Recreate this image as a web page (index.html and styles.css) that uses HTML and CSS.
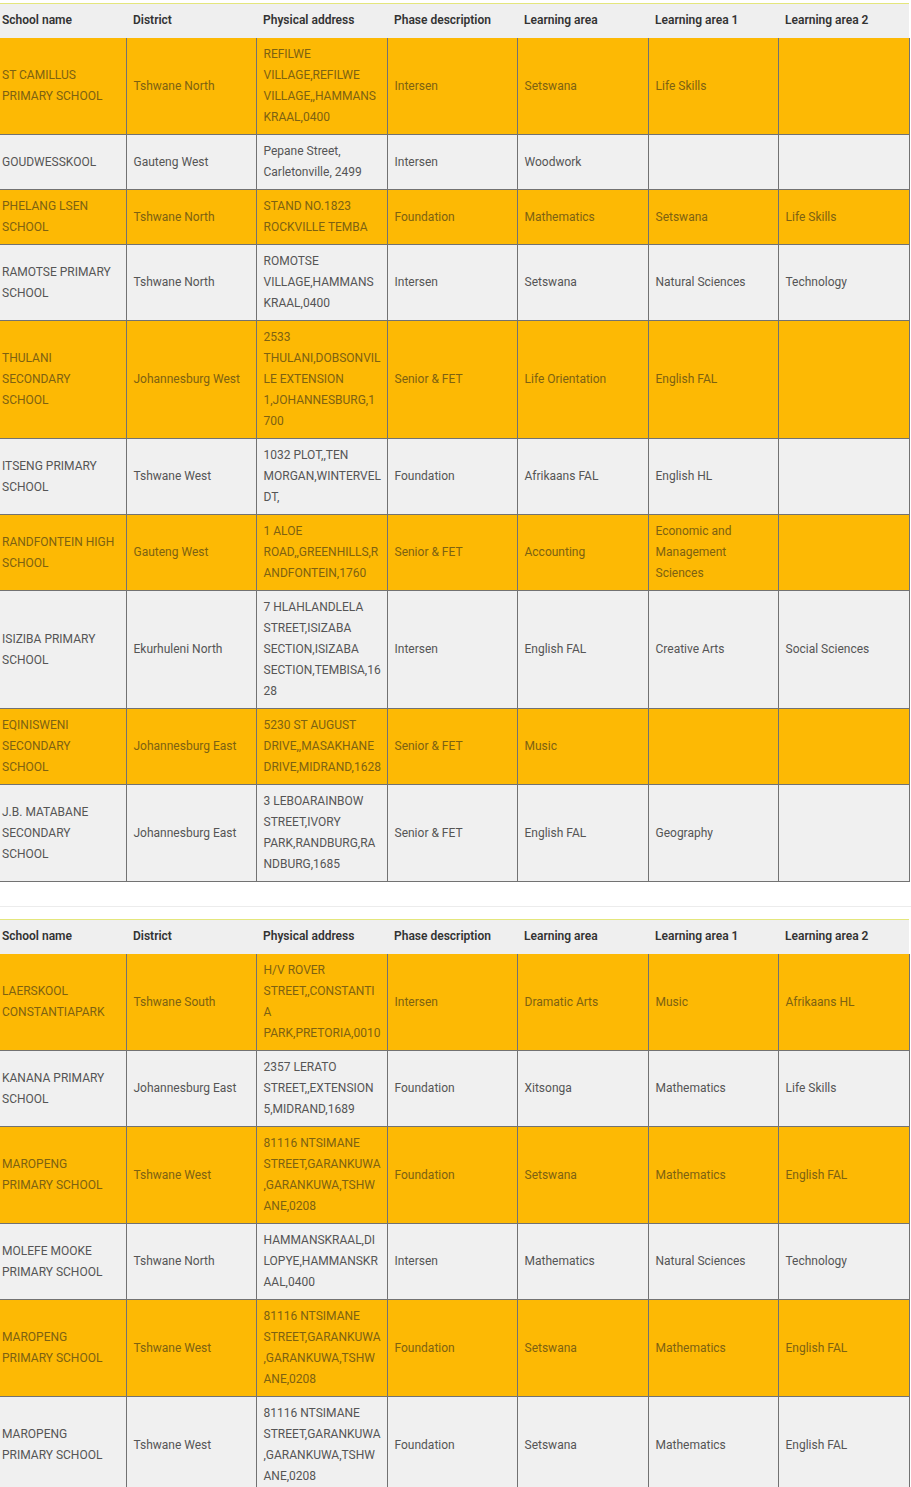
FILE: index.html
```html
<!DOCTYPE html>
<html>
<head>
<meta charset="utf-8">
<link rel="stylesheet" href="styles.css">
</head>
<body>
<div class="page">
<table class="schools">
<colgroup><col class="c1"><col class="c2"><col class="c3"><col class="c4"><col class="c5"><col class="c6"><col class="c7"></colgroup>
<thead><tr><th>School name</th><th>District</th><th>Physical address</th><th>Phase description</th><th>Learning area</th><th>Learning area 1</th><th>Learning area 2</th></tr></thead>
<tbody>
<tr class="hi"><td>ST CAMILLUS PRIMARY SCHOOL</td><td>Tshwane North</td><td>REFILWE VILLAGE,REFILWE VILLAGE,,HAMMANS KRAAL,0400</td><td>Intersen</td><td>Setswana</td><td>Life Skills</td><td></td></tr>
<tr><td>GOUDWESSKOOL</td><td>Gauteng West</td><td>Pepane Street, Carletonville, 2499</td><td>Intersen</td><td>Woodwork</td><td></td><td></td></tr>
<tr class="hi"><td>PHELANG LSEN SCHOOL</td><td>Tshwane North</td><td>STAND NO.1823 ROCKVILLE TEMBA</td><td>Foundation</td><td>Mathematics</td><td>Setswana</td><td>Life Skills</td></tr>
<tr><td>RAMOTSE PRIMARY SCHOOL</td><td>Tshwane North</td><td>ROMOTSE VILLAGE,HAMMANS KRAAL,0400</td><td>Intersen</td><td>Setswana</td><td>Natural Sciences</td><td>Technology</td></tr>
<tr class="hi"><td>THULANI SECONDARY SCHOOL</td><td>Johannesburg West</td><td>2533 THULANI,DOBSONVILLE EXTENSION 1,JOHANNESBURG,1700</td><td>Senior &amp; FET</td><td>Life Orientation</td><td>English FAL</td><td></td></tr>
<tr><td>ITSENG PRIMARY SCHOOL</td><td>Tshwane West</td><td>1032 PLOT,,TEN MORGAN,WINTERVELDT,</td><td>Foundation</td><td>Afrikaans FAL</td><td>English HL</td><td></td></tr>
<tr class="hi"><td>RANDFONTEIN HIGH SCHOOL</td><td>Gauteng West</td><td>1 ALOE ROAD,,GREENHILLS,RANDFONTEIN,1760</td><td>Senior &amp; FET</td><td>Accounting</td><td>Economic and Management Sciences</td><td></td></tr>
<tr><td>ISIZIBA PRIMARY SCHOOL</td><td>Ekurhuleni North</td><td>7 HLAHLANDLELA STREET,ISIZABA SECTION,ISIZABA SECTION,TEMBISA,1628</td><td>Intersen</td><td>English FAL</td><td>Creative Arts</td><td>Social Sciences</td></tr>
<tr class="hi"><td>EQINISWENI SECONDARY SCHOOL</td><td>Johannesburg East</td><td>5230 ST AUGUST DRIVE,,MASAKHANE DRIVE,MIDRAND,1628</td><td>Senior &amp; FET</td><td>Music</td><td></td><td></td></tr>
<tr><td>J.B. MATABANE SECONDARY SCHOOL</td><td>Johannesburg East</td><td>3 LEBOARAINBOW STREET,IVORY PARK,RANDBURG,RANDBURG,1685</td><td>Senior &amp; FET</td><td>English FAL</td><td>Geography</td><td></td></tr>
</tbody>
</table>

<hr class="divider">

<table class="schools">
<colgroup><col class="c1"><col class="c2"><col class="c3"><col class="c4"><col class="c5"><col class="c6"><col class="c7"></colgroup>
<thead><tr><th>School name</th><th>District</th><th>Physical address</th><th>Phase description</th><th>Learning area</th><th>Learning area 1</th><th>Learning area 2</th></tr></thead>
<tbody>
<tr class="hi"><td>LAERSKOOL CONSTANTIAPARK</td><td>Tshwane South</td><td>H/V ROVER STREET,,CONSTANTIA PARK,PRETORIA,0010</td><td>Intersen</td><td>Dramatic Arts</td><td>Music</td><td>Afrikaans HL</td></tr>
<tr><td>KANANA PRIMARY SCHOOL</td><td>Johannesburg East</td><td>2357 LERATO STREET,,EXTENSION 5,MIDRAND,1689</td><td>Foundation</td><td>Xitsonga</td><td>Mathematics</td><td>Life Skills</td></tr>
<tr class="hi"><td>MAROPENG PRIMARY SCHOOL</td><td>Tshwane West</td><td>81116 NTSIMANE STREET,GARANKUWA,GARANKUWA,TSHWANE,0208</td><td>Foundation</td><td>Setswana</td><td>Mathematics</td><td>English FAL</td></tr>
<tr><td>MOLEFE MOOKE PRIMARY SCHOOL</td><td>Tshwane North</td><td>HAMMANSKRAAL,DILOPYE,HAMMANSKRAAL,0400</td><td>Intersen</td><td>Mathematics</td><td>Natural Sciences</td><td>Technology</td></tr>
<tr class="hi"><td>MAROPENG PRIMARY SCHOOL</td><td>Tshwane West</td><td>81116 NTSIMANE STREET,GARANKUWA,GARANKUWA,TSHWANE,0208</td><td>Foundation</td><td>Setswana</td><td>Mathematics</td><td>English FAL</td></tr>
<tr><td>MAROPENG PRIMARY SCHOOL</td><td>Tshwane West</td><td>81116 NTSIMANE STREET,GARANKUWA,GARANKUWA,TSHWANE,0208</td><td>Foundation</td><td>Setswana</td><td>Mathematics</td><td>English FAL</td></tr>
</tbody>
</table>
</div>
</body>
</html>
```

FILE: styles.css
```css
html, body {
  margin: 0;
  padding: 0;
  background: #ffffff;
}

.page {
  padding-top: 3px;
  font-family: Roboto, "Liberation Sans", Arial, sans-serif;
  font-size: 12px;
  line-height: 21px;
}

.schools {
  border-collapse: collapse;
  table-layout: fixed;
  width: 909px;
  border-top: 1px solid #e4e67c;
}

.c1 { width: 126px; }
.c2 { width: 130px; }
.c3 { width: 131px; }
.c4 { width: 130px; }
.c5 { width: 131px; }
.c6 { width: 130px; }
.c7 { width: 131px; }

.schools th {
  background: #efefef;
  color: #333333;
  font-weight: 600;
  text-align: left;
  padding: 6px 6px 7px 7px;
  border: none;
}

.schools td {
  background: #f0f0f0;
  color: #555555;
  padding: 6px 5px 6px 7px;
  border: 1px solid #727272;
  vertical-align: middle;
  overflow-wrap: anywhere;
  word-break: break-word;
}

.schools tbody tr:first-child td {
  border-top: none;
}

.schools th:first-child,
.schools td:first-child {
  padding-left: 2px;
  padding-right: 7px;
  border-left: none;
}

.schools tr.hi td {
  background: #fdb904;
  color: #7d6212;
}

.divider {
  border: none;
  border-top: 1px solid #ececec;
  margin: 24px 0 12px 0;
  height: 0;
}
```
